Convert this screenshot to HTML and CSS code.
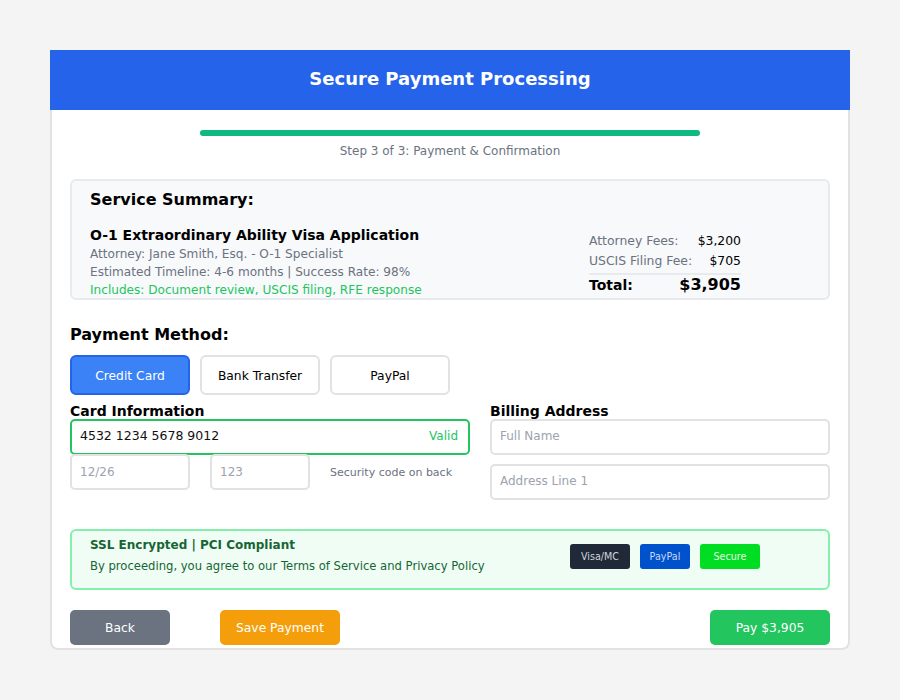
FILE: index.html
```html
<!DOCTYPE html>
<html>
<head>
<meta charset="utf-8">
<link rel="stylesheet" href="styles.css">
</head>
<body>
<div class="card">
  <div class="header">Secure Payment Processing</div>
  <div class="content">
    <div class="progress"><div class="progress-fill"></div></div>
    <div class="step">Step 3 of 3: Payment &amp; Confirmation</div>

    <div class="summary">
      <h3 class="summary-title">Service Summary:</h3>
      <div class="summary-body">
        <div class="service">
          <div class="service-name">O-1 Extraordinary Ability Visa Application</div>
          <div class="service-line">Attorney: Jane Smith, Esq. - O-1 Specialist</div>
          <div class="service-line">Estimated Timeline: 4-6 months | Success Rate: 98%</div>
          <div class="service-line green">Includes: Document review, USCIS filing, RFE response</div>
        </div>
        <div class="fees">
          <div class="fee-row"><span class="fee-label">Attorney Fees:</span><span>$3,200</span></div>
          <div class="fee-row"><span class="fee-label">USCIS Filing Fee:</span><span>$705</span></div>
          <div class="fee-total"><span>Total:</span><span class="total-amount">$3,905</span></div>
        </div>
      </div>
    </div>

    <h3 class="section-title">Payment Method:</h3>
    <div class="methods">
      <div class="method active">Credit Card</div>
      <div class="method">Bank Transfer</div>
      <div class="method">PayPal</div>
    </div>

    <div class="forms">
      <div class="form-col left">
        <div class="label">Card Information</div>
        <div class="input valid"><span class="value">4532 1234 5678 9012</span><span class="valid-text">Valid</span></div>
        <div class="row-small">
          <div class="input small exp"><span class="ph">12/26</span></div>
          <div class="input small cvv"><span class="ph">123</span></div>
          <span class="hint">Security code on back</span>
        </div>
      </div>
      <div class="form-col right">
        <div class="label">Billing Address</div>
        <div class="input"><span class="ph">Full Name</span></div>
        <div class="input second"><span class="ph">Address Line 1</span></div>
      </div>
    </div>

    <div class="secure">
      <div class="secure-text">
        <div class="secure-title">SSL Encrypted | PCI Compliant</div>
        <div class="secure-sub">By proceeding, you agree to our Terms of Service and Privacy Policy</div>
      </div>
      <div class="badges">
        <span class="badge dark">Visa/MC</span>
        <span class="badge blue">PayPal</span>
        <span class="badge lime">Secure</span>
      </div>
    </div>

    <div class="actions">
      <div class="btn gray">Back</div>
      <div class="btn orange">Save Payment</div>
      <div class="spacer"></div>
      <div class="btn green-btn">Pay $3,905</div>
    </div>
  </div>
</div>
</body>
</html>
```

FILE: styles.css
```css
* { box-sizing: border-box; }
html, body { margin: 0; padding: 0; }
body {
  background: #f4f4f4;
  font-family: "DejaVu Sans", sans-serif;
  color: #000;
}
.card {
  width: 800px;
  margin: 50px auto 0;
  background: #fff;
  border: 2px solid #e2e2e2;
  border-top: none;
  border-radius: 0 0 8px 8px;
  height: 600px;
}
.header {
  background: #2563eb;
  color: #fff;
  height: 60px;
  margin: 0 -2px;
  padding-bottom: 4px;
  display: flex;
  align-items: center;
  justify-content: center;
  font-size: 18px;
  font-weight: bold;
}
.content { padding: 20px 18px 0; }
.progress {
  width: 500px;
  height: 6px;
  margin: 0 auto;
  background: #e5e7eb;
  border-radius: 3px;
}
.progress-fill { width: 100%; height: 100%; background: #10b981; border-radius: 3px; }
.step {
  text-align: center;
  font-size: 12px;
  color: #6b7280;
  margin-top: 8px;
  line-height: 14px;
}
.summary {
  margin-top: 21px;
  background: #f8f9fb;
  border: 2px solid #e8eaee;
  border-radius: 6px;
  padding: 9px 18px 0;
  height: 121px;
  overflow: hidden;
}
.summary-title { margin: 0; font-size: 16px; line-height: 20px; }
.summary-body {
  display: flex;
  justify-content: space-between;
  align-items: center;
  margin-top: 16px;
}
.service-name { font-size: 14px; font-weight: bold; line-height: 19px; }
.service-line { font-size: 12.1px; color: #6b7280; line-height: 18px; }
.service-line.green { color: #22c55e; }
.fees { width: 152px; margin-right: 69px; font-size: 12.4px; padding-top: 0; }
.fee-row { display: flex; justify-content: space-between; line-height: 20px; }
.fee-label { color: #6b7280; }
.fee-total {
  display: flex;
  justify-content: space-between;
  align-items: baseline;
  border-top: 2px solid #e8eaee;
  margin-top: 2px;
  padding-top: 0;
  font-weight: bold;
  font-size: 14px;
  line-height: 20px;
}
.total-amount { font-size: 16px; }
.section-title { margin: 25px 0 0; font-size: 16px; line-height: 20px; }
.methods { display: flex; gap: 10px; margin-top: 10px; }
.method {
  width: 120px;
  height: 40px;
  border: 2px solid #e2e2e2;
  border-radius: 6px;
  background: #fff;
  display: flex;
  align-items: center;
  justify-content: center;
  font-size: 12.3px;
  padding-top: 2px;
}
.method.active { background: #3b82f6; border-color: #2563eb; color: #fff; }
.forms { display: flex; gap: 20px; margin-top: 8px; }
.form-col.left { width: 400px; }
.form-col.right { flex: 1; }
.label { font-size: 14px; font-weight: bold; line-height: 16px; }
.input {
  height: 36px;
  border: 2px solid #e2e2e2;
  border-radius: 5px;
  display: flex;
  align-items: center;
  justify-content: space-between;
  padding: 0 10px 3px 8px;
  font-size: 12px;
  margin-top: 0;
}
.input.second { margin-top: 9px; }
.input.valid { border-color: #22c55e; }
.value { font-size: 12.5px; color: #111; }
.valid-text { color: #22c55e; font-size: 12px; }
.ph { color: #9ca3af; }
.row-small { display: flex; align-items: center; gap: 20px; margin-top: -1px; }
.input.small { margin-top: 0; padding-bottom: 0; }
.input.exp { width: 120px; }
.input.cvv { width: 100px; }
.hint { font-size: 11px; color: #6b7280; padding-top: 1px; }
.secure {
  margin-top: 29px;
  height: 61px;
  background: #f0fdf4;
  border: 2px solid #86efac;
  border-radius: 6px;
  display: flex;
  align-items: flex-start;
  padding: 6px 18px 0;
}
.secure-text { width: 480px; color: #166534; }
.secure-title { font-size: 12px; font-weight: bold; line-height: 16px; }
.secure-sub { font-size: 11.6px; line-height: 14px; margin-top: 6px; }
.badges { display: flex; gap: 10px; margin-top: 7px; }
.badge {
  height: 25px;
  display: inline-flex;
  align-items: center;
  justify-content: center;
  font-size: 9.6px;
  color: #fff;
  border-radius: 3px;
}
.badge.dark { background: #1f2937; width: 60px; color: #d1d5db; }
.badge.blue { background: #0052cc; width: 50px; color: #c7d7f5; }
.badge.lime { background: #00dd22; width: 60px; color: #e8ffe8; }
.actions { display: flex; gap: 50px; margin-top: 20px; }
.spacer { flex: 1; }
.btn {
  height: 35px;
  border-radius: 5px;
  color: #fff;
  font-size: 12.3px;
  display: flex;
  align-items: center;
  justify-content: center;
}
.btn.gray { background: #6b7280; width: 100px; }
.btn.orange { background: #f59e0b; width: 120px; }
.btn.green-btn { background: #22c55e; width: 120px; }
```
